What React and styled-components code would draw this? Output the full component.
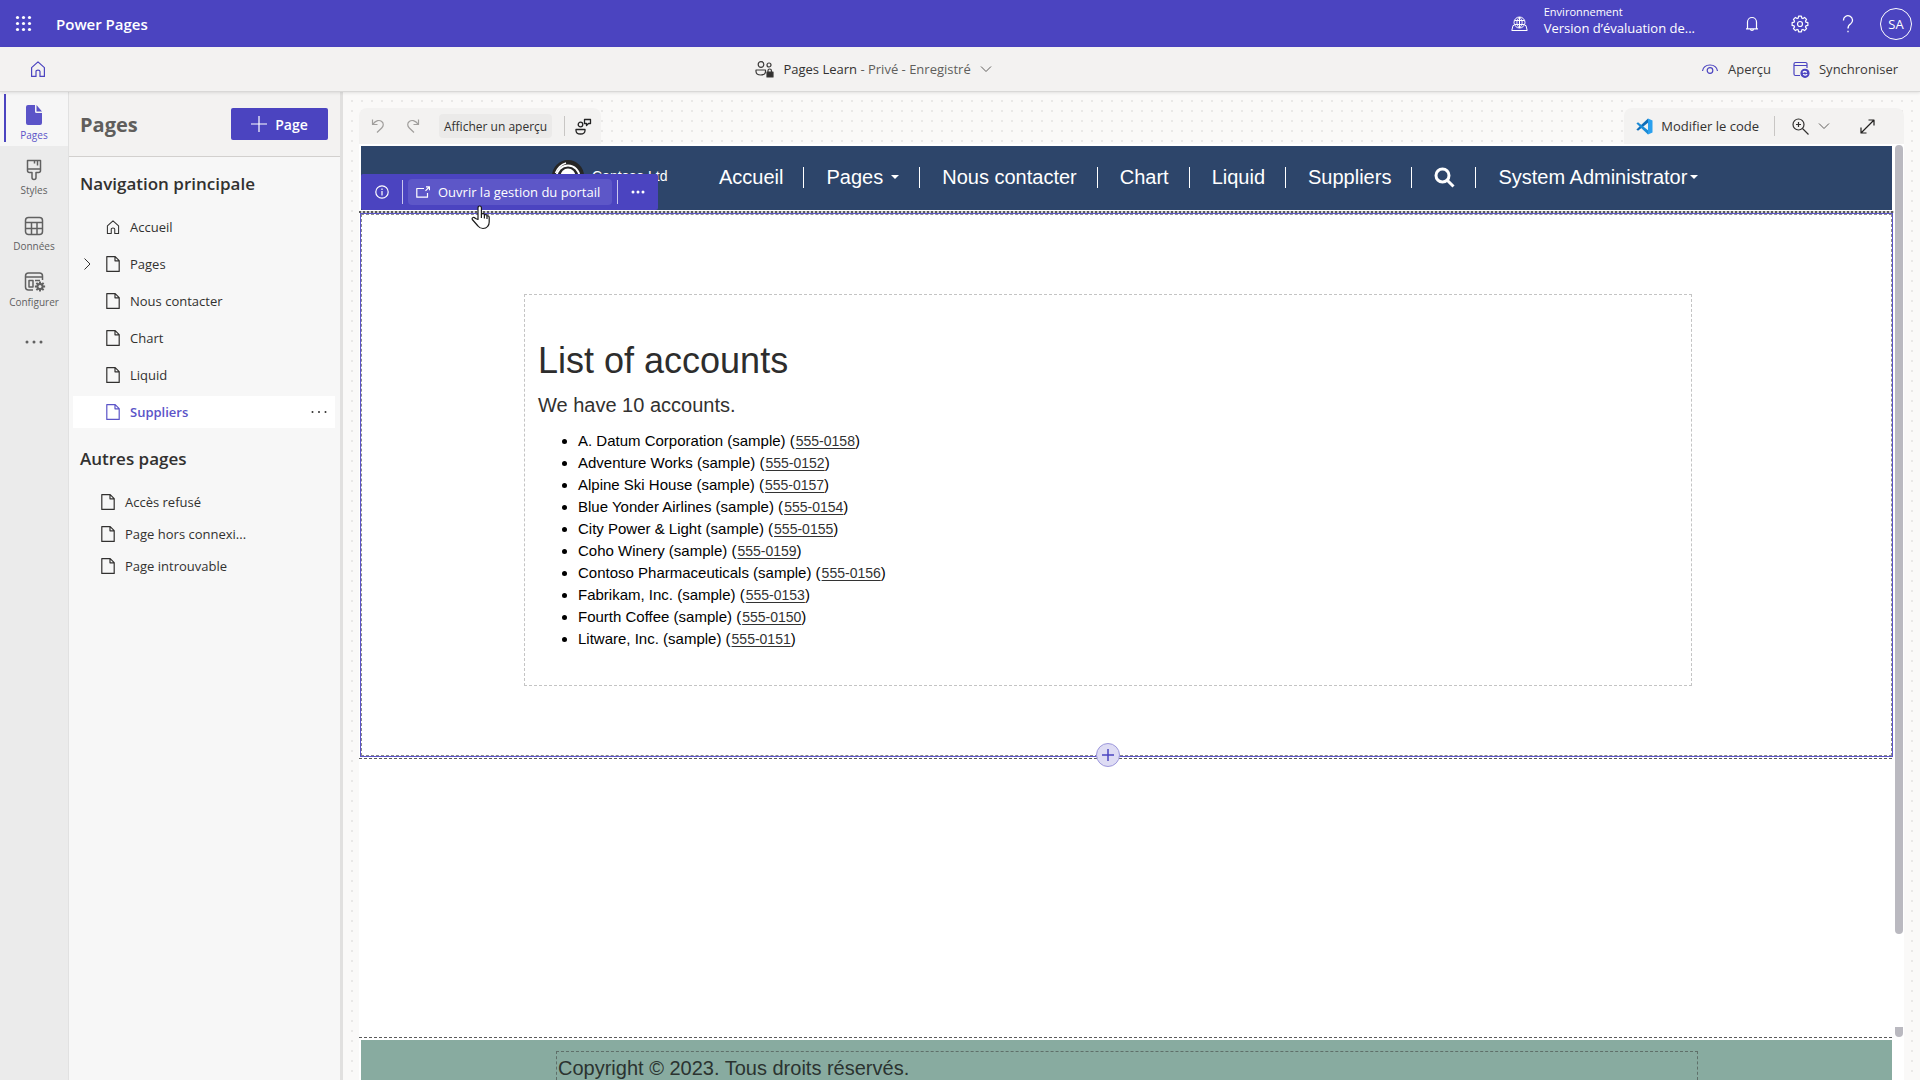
import React from "react";
import styled, { createGlobalStyle } from "styled-components";

const ui = `"Segoe UI", "Open Sans", "Noto Sans", sans-serif`;
const site = `"Liberation Sans", Arial, sans-serif`;
const brand = "#4b44c0";

const GlobalStyle = createGlobalStyle`
  *, *::before, *::after { box-sizing: border-box; }
  body { margin: 0; background: #faf9f8; font-family: ${ui}; color: #323130; }
  button { font: inherit; color: inherit; background: none; border: 0; padding: 0; cursor: pointer; }
  a { color: inherit; text-decoration: none; }
  ul { margin: 0; padding: 0; list-style: none; }
  h1, h2, p { margin: 0; }
  svg { display: block; flex: none; }
`;

const Shell = styled.div`
  display: flex;
  flex-direction: column;
  height: 100vh;
  overflow: hidden;
`;

const TopBar = styled.header`
  display: flex;
  align-items: center;
  height: 47px;
  flex: none;
  padding: 0 8px 0 15px;
  background: ${brand};
  color: #fff;
`;
const IconButton = styled.button`
  display: flex;
  align-items: center;
  justify-content: center;
  width: ${(p) => p.$w || 48}px;
  height: 32px;
`;
const Brand = styled.a`
  flex: 1;
  margin-left: 24px;
  font-size: 15px;
  line-height: 20px;
  font-weight: 600;
`;
const Environment = styled.button`
  display: flex;
  align-items: center;
  gap: 16px;
  margin-right: 33px;
  text-align: left;
`;
const EnvText = styled.span`
  display: flex;
  flex-direction: column;
  padding-bottom: 8px;
  font-size: 13px;
  line-height: 16px;
`;
const EnvLabel = styled.span`
  font-size: 11px;
  line-height: 16px;
`;
const Avatar = styled.button`
  width: 32px;
  height: 32px;
  margin-left: 8px;
  border: 1px solid #fff;
  border-radius: 50%;
  font-size: 13px;
  text-align: center;
`;

const CommandBar = styled.div`
  position: relative;
  z-index: 2;
  display: grid;
  grid-template-columns: 9fr auto 11fr;
  align-items: center;
  height: 45px;
  flex: none;
  padding: 0 22px 0 14px;
  background: #f3f2f1;
  border-bottom: 1px solid #d9d8d7;
  box-shadow: 0 1px 3px rgba(0, 0, 0, 0.1);
  font-size: 13px;
`;
const SiteStatus = styled.button`
  display: flex;
  align-items: center;
  gap: 9px;
  color: #605e5c;
`;
const Strong = styled.span`
  color: #323130;
`;
const CommandActions = styled.div`
  display: flex;
  justify-content: flex-end;
  gap: 22px;
`;
const Command = styled.button`
  display: flex;
  align-items: center;
  gap: 9px;
  color: #3b3a39;
`;

const Workspace = styled.div`
  display: flex;
  flex: 1;
  min-height: 0;
`;

const Rail = styled.nav`
  display: flex;
  flex-direction: column;
  width: 68px;
  flex: none;
  background: #ebebeb;
`;
const RailItem = styled.button`
  display: flex;
  flex-direction: column;
  align-items: center;
  justify-content: center;
  gap: 2px;
  height: ${(p) => (p.$active ? 54 : 56)}px;
  padding-top: ${(p) => (p.$plain ? 0 : 8)}px;
  font-size: 10px;
  line-height: 14px;
  color: ${(p) => (p.$active ? "#5b54c8" : "#616161")};
  background: ${(p) => (p.$active ? "#f6f6f6" : "transparent")};
  ${(p) => p.$active && `background-image: linear-gradient(${brand}, ${brand}); background-size: 2px 48px; background-position: 4px 2px; background-repeat: no-repeat;`}
`;

const Panel = styled.aside`
  width: 275px;
  flex: none;
  background: #f7f7f7;
  border-left: 1px solid #e1e1e1;
  border-right: 3px solid #e1e0df;
`;
const PanelHeader = styled.div`
  display: flex;
  align-items: center;
  justify-content: space-between;
  height: 65px;
  padding: 0 12px 0 11px;
  background: #f3f2f1;
  border-bottom: 1px solid #d2d0ce;
`;
const PanelTitle = styled.h1`
  padding-top: 2px;
  font-size: 20px;
  line-height: 28px;
  font-weight: 700;
  color: #605e5c;
`;
const AddButton = styled.button`
  display: flex;
  align-items: center;
  justify-content: center;
  gap: 8px;
  width: 97px;
  height: 32px;
  border-radius: 2px;
  background: ${brand};
  color: #fff;
  font-size: 14px;
  font-weight: 600;
`;
const GroupTitle = styled.h2`
  padding: 13px 11px;
  font-size: 17px;
  line-height: 28px;
  font-weight: 600;
  color: #323130;
`;
const Tree = styled.ul`
  display: flex;
  flex-direction: column;
  gap: ${(p) => p.$gap}px;
  padding: 0 5px 4px ${(p) => p.$inset}px;
`;
const TreeRow = styled.li`
  display: flex;
  align-items: center;
  height: 32px;
  padding-right: 8px;
  font-size: 13px;
  color: ${(p) => (p.$active ? "#5b54c8" : "#323130")};
  font-weight: ${(p) => (p.$active ? 600 : 400)};
  background: ${(p) => (p.$active ? "#fff" : "transparent")};
`;
const Expander = styled.button`
  display: flex;
  width: 33px;
  padding-left: 10px;
`;
const TreeLink = styled.a`
  display: flex;
  align-items: center;
  flex: 1;
  gap: 10px;
`;

const Canvas = styled.main`
  display: flex;
  flex-direction: column;
  flex: 1;
  min-width: 0;
  padding: 16px 16px 0;
  background: #faf9f8 radial-gradient(circle, #e9e8e7 1px, transparent 1px) 4px 4px / 10px 10px;
`;
const Toolbars = styled.div`
  display: flex;
  justify-content: space-between;
  flex: none;
`;
const Toolbar = styled.div`
  display: flex;
  align-items: center;
  height: 36px;
  padding-left: ${(p) => p.$pad}px;
  border-radius: 8px 8px 0 0;
  background: #f3f2f1;
  font-size: 13px;
`;
const PreviewButton = styled.button`
  height: 24px;
  margin: 0 12px 0 9px;
  padding: 0 5px;
  border-radius: 4px;
  background: #ebeae9;
  font-size: 12px;
`;
const Divider = styled.span`
  width: 1px;
  height: ${(p) => p.$h || 20}px;
  margin-right: ${(p) => p.$after || 0}px;
  background: ${(p) => p.$color || "#c8c6c4"};
`;
const CodeButton = styled.button`
  display: flex;
  align-items: center;
  gap: 8px;
  margin-right: 15px;
`;

const Frame = styled.div`
  display: flex;
  flex: 1;
  min-height: 0;
  background: #fff;
`;
const SitePage = styled.div`
  display: flex;
  flex-direction: column;
  flex: 1;
  min-width: 0;
  padding-top: 2px;
  overflow: hidden;
  font-family: ${site};
`;
const ScrollTrack = styled.div`
  display: flex;
  flex-direction: column;
  justify-content: space-between;
  width: 10px;
  padding: 1px 1px 43px;
`;
const ScrollThumb = styled.div`
  height: ${(p) => p.$h};
  border-radius: ${(p) => p.$r};
  background: #bab9c0;
`;

const SiteNav = styled.nav`
  position: relative;
  display: flex;
  align-items: center;
  height: 64px;
  flex: none;
  margin: 0 2px 1px;
  padding: 0 0 2px 191px;
  background: #2d456a;
  color: #fff;
`;
const SiteLogo = styled.a`
  display: flex;
  align-items: center;
  gap: 8px;
  width: 145px;
  padding-bottom: 2px;
  font-size: 14px;
  line-height: 20px;
`;
const NavItem = styled.a`
  display: flex;
  align-items: center;
  gap: ${(p) => p.$gap || 0}px;
  height: 21px;
  padding: 0 20px 0 22px;
  border-right: ${(p) => (p.$last ? 0 : 1)}px solid #fff;
  font-size: 20px;
  white-space: nowrap;
`;
const Caret = styled.span`
  border: 4px solid transparent;
  border-top-color: #fff;
  border-bottom: 0;
`;

const SectionToolbar = styled.div`
  position: absolute;
  left: 0;
  bottom: 0;
  display: flex;
  align-items: center;
  height: 36px;
  border-radius: 2px;
  background: ${brand};
  font-family: ${ui};
  font-size: 13px;
`;
const OpenButton = styled.button`
  display: flex;
  align-items: center;
  gap: 8px;
  height: 26px;
  margin: 0 5px;
  padding: 0 12px 0 8px;
  border-radius: 4px;
  background: #5d57c8;
`;
const Pointer = styled.svg`
  position: absolute;
  left: 110px;
  top: 59px;
  z-index: 3;
`;

const DashRule = styled.div`
  height: ${(p) => p.$h}px;
  flex: none;
  background: repeating-linear-gradient(90deg, #5a5a5a 0 ${(p) => p.$on}px, ${(p) => p.$gap} ${(p) => p.$on}px ${(p) => p.$on + 2}px);
`;
const Section = styled.section`
  position: relative;
  margin: 0 1px;
  border: 1px solid #5b54c8;
`;
const SectionInner = styled.div`
  padding: 79px 199px 69px 162px;
  border: 1px dashed #8a8a8a;
`;
const TextBlock = styled.div`
  min-height: 392px;
  padding: 46px 13px 34px;
  border: 1px dashed #c4c4c4;
`;
const Title = styled.h1`
  font-size: 36px;
  line-height: 40px;
  font-weight: 400;
  color: #2d2d2d;
`;
const Subtitle = styled.h2`
  margin: 12px 0 13px;
  font-size: 20px;
  line-height: 24px;
  font-weight: 400;
  color: #323130;
`;
const Accounts = styled.ul`
  padding-left: 40px;
  list-style: disc;
  font-size: 15px;
  line-height: 22px;
  color: #000;
`;
const Phone = styled.a`
  margin-left: 1px;
  font-size: 14px;
  color: #333;
  text-decoration: underline;
  text-underline-offset: 2px;
`;
const AddSection = styled.button`
  position: absolute;
  left: calc(50% - 31px);
  bottom: -11px;
  display: flex;
  align-items: center;
  justify-content: center;
  width: 24px;
  height: 24px;
  border: 1px solid #9d98dc;
  border-radius: 50%;
  background: #dedcf4;
`;
const EmptyArea = styled.div`
  flex: 1;
  padding-top: 1px;
`;
const Footer = styled.footer`
  flex: none;
  height: 40px;
  margin: 2px 2px 0;
  padding: 11px 194px 0 195px;
  background: #88aba0;
`;
const FooterText = styled.p`
  height: 29px;
  padding: 4px 1px 0;
  border: 1px dashed #5f6f69;
  border-bottom: 0;
  font-size: 20px;
  line-height: 24px;
  color: #2b3330;
`;

const Svg = ({ w = 20, h, vb, children, color = "currentColor", sw = 1 }) => (
  <svg width={w} height={h || w} viewBox={vb || `0 0 ${w} ${h || w}`} fill="none" stroke={color} strokeWidth={sw} strokeLinejoin="round" aria-hidden="true">
    {children}
  </svg>
);

const HomeIcon = ({ color, size = 16 }) => (
  <Svg w={size} vb="0 0 16 16" color={color} sw={1.2}>
    <path d="M1.6 6.6 8 .9l6.4 5.7v8.8H10V10.5Q10 9.2 8 9.2t-2 1.3v4.9H1.6z" />
  </Svg>
);
const FileIcon = () => (
  <Svg w={14} h={16} sw={1.2}>
    <path d="M.8.6h8.4l4 4v10.8H.8zM9 .8v4h4" />
  </Svg>
);
const ChevronDown = ({ color = "#605e5c" }) => (
  <Svg w={12} h={8} color={color}>
    <path d="m1 1.5 5 5 5-5" />
  </Svg>
);
const Dots = ({ w = 16, r = 1, color = "currentColor" }) => (
  <svg width={w} height="4" viewBox={`0 0 ${w} 4`} fill={color} aria-hidden="true">
    <circle cx={r + 0.5} cy="2" r={r} />
    <circle cx={w / 2} cy="2" r={r} />
    <circle cx={w - r - 0.5} cy="2" r={r} />
  </svg>
);
const gearPath = (cx, cy, r1, r2, n) => {
  const pts = [];
  for (let i = 0; i < n; i++) {
    const a = (i / n) * Math.PI * 2 - Math.PI / 2;
    const s = Math.PI / n;
    [[-0.75, r1], [-0.45, r2], [0.45, r2], [0.75, r1]].forEach(([k, r]) =>
      pts.push(`${(cx + Math.cos(a + s * k) * r).toFixed(2)} ${(cy + Math.sin(a + s * k) * r).toFixed(2)}`)
    );
  }
  return `M${pts.join("L")}z`;
};

const railItems = [
  {
    label: "Pages",
    icon: (
      <svg width="24" height="22" viewBox="0 0 24 22" fill="#5b54c8" aria-hidden="true">
        <path d="M6 1h7v6.5A1.5 1.5 0 0 0 14.500 9H20v10a2 2 0 0 1-2 2H6a2 2 0 0 1-2-2V3a2 2 0 0 1 2-2z" />
        <path d="M14.500 1 20 7.500h-5.500z" />
      </svg>
    ),
  },
  {
    label: "Styles",
    icon: (
      <Svg w={24} h={22} sw={1.5}>
        <path d="M5.500 1.500h13v10a2 2 0 0 1-2 2h-2.500v5a2 2 0 0 1-4 0v-5H7.500a2 2 0 0 1-2-2zM5.500 10h13M12.500 1.500v3M15.500 1.500v5" />
      </Svg>
    ),
  },
  {
    label: "Données",
    icon: (
      <Svg w={24} h={22} sw={1.5}>
        <rect x="3.500" y="2.500" width="17" height="17" rx="3" />
        <path d="M3.500 7.500h17M3.500 13.500h17M9.500 7.500v12M15 7.500v12" />
      </Svg>
    ),
  },
  {
    label: "Configurer",
    icon: (
      <Svg w={24} h={22} sw={1.5}>
        <path d="M20.500 9V5a3 3 0 0 0-3-3h-11a3 3 0 0 0-3 3v11a3 3 0 0 0 3 3H11M3.500 6h17M7 9.500h4v6.500H7zM13 9.500h5" />
        <path d={gearPath(18, 15.5, 3.6, 5.2, 8)} fill="currentColor" stroke="none" />
        <circle cx="18" cy="15.500" r="1.500" fill="#ebebeb" stroke="none" />
      </Svg>
    ),
  },
];

const mainPages = [
  { label: "Accueil", home: true },
  { label: "Pages", expandable: true },
  { label: "Nous contacter" },
  { label: "Chart" },
  { label: "Liquid" },
  { label: "Suppliers", active: true },
];
const otherPages = ["Accès refusé", "Page hors connexi...", "Page introuvable"];

const accounts = [
  ["A. Datum Corporation", "555-0158"],
  ["Adventure Works", "555-0152"],
  ["Alpine Ski House", "555-0157"],
  ["Blue Yonder Airlines", "555-0154"],
  ["City Power & Light", "555-0155"],
  ["Coho Winery", "555-0159"],
  ["Contoso Pharmaceuticals", "555-0156"],
  ["Fabrikam, Inc.", "555-0153"],
  ["Fourth Coffee", "555-0150"],
  ["Litware, Inc.", "555-0151"],
];

function Header() {
  return (
    <TopBar>
      <IconButton $w={17} aria-label="Lanceur d'applications">
        <svg width="17" height="17" viewBox="0 0 17 17" fill="#fff" aria-hidden="true">
          {[2.5, 8.5, 14.5].map((y) => [2.5, 8.5, 14.5].map((x) => <circle key={`${x}-${y}`} cx={x} cy={y} r="1.600" />))}
        </svg>
      </IconButton>
      <Brand href="#">Power Pages</Brand>
      <Environment>
        <Svg w={17} h={16}>
          <circle cx="8.500" cy="6.500" r="5.500" />
          <path d="M3.500 4.500h10M3.500 8.500h10M8.500 1v11M8.500 1c-3.500 3.500-3.500 7.500 0 11c3.500-3.500 3.500-7.500 0-11" />
          <path d="M3 9.500H2L.8 14.500h15.400l-1.200-5h-1" />
        </Svg>
        <EnvText>
          <EnvLabel>Environnement</EnvLabel>
          Version d’évaluation de...
        </EnvText>
      </Environment>
      <IconButton aria-label="Notifications">
        <Svg w={16} sw={1.2}>
          <path d="M2 12.800h12M3.500 12.500V6a4.500 4.500 0 0 1 9 0v6.500M6.500 13a1.500 1.500 0 0 0 3 0" />
        </Svg>
      </IconButton>
      <IconButton aria-label="Paramètres">
        <Svg w={18} sw={1.2}>
          <path d={gearPath(9, 9, 6.2, 8, 8)} />
          <circle cx="9" cy="9" r="2.500" />
        </Svg>
      </IconButton>
      <IconButton aria-label="Aide">
        <Svg w={12} h={18} sw={1.3}>
          <path d="M1.500 5.500a4.500 4.500 0 1 1 7.200 3.300Q6 10.500 6 13.500M6 15.800v1.400" />
        </Svg>
      </IconButton>
      <Avatar>SA</Avatar>
    </TopBar>
  );
}

function Commands() {
  return (
    <CommandBar>
      <IconButton aria-label="Accueil">
        <HomeIcon color={brand} />
      </IconButton>
      <SiteStatus>
        <Svg w={19} h={18} sw={1.2} color="#3b3a39">
          <circle cx="6" cy="4.500" r="2.800" />
          <circle cx="14" cy="5" r="2" />
          <path d="M1 10h9.500v1.500q0 3.500-4.700 3.500T1 11.500z" />
          <path d="M13 12v-1.500q0-1.500 1.700-1.500t1.700 1.500V12" />
          <rect x="12" y="12" width="6" height="5" fill="#323130" />
        </Svg>
        <span>
          <Strong>Pages Learn</Strong> - Privé - Enregistré
        </span>
        <ChevronDown />
      </SiteStatus>
      <CommandActions>
        <Command>
          <Svg w={18} h={14} color={brand} sw={1.2}>
            <path d="M1.500 9Q2.500 3 9 3t7.500 6" />
            <circle cx="9" cy="8.500" r="2.800" />
          </Svg>
          Aperçu
        </Command>
        <Command>
          <Svg w={17} h={17} color={brand} sw={1.2}>
            <path d="M7 14.500H2.500a1.500 1.500 0 0 1-1.500-1.500V3a1.500 1.500 0 0 1 1.500-1.500h10A1.500 1.500 0 0 1 14 3v4M1 4.500h13" />
            <circle cx="12" cy="12.300" r="4" fill={brand} />
            <path d="M9.800 11.500q2-2 4 0M14.200 13.200q-2 2-4 0" stroke="#fff" />
          </Svg>
          Synchroniser
        </Command>
      </CommandActions>
    </CommandBar>
  );
}

function SideRail() {
  return (
    <Rail>
      {railItems.map((item, i) => (
        <RailItem key={item.label} $active={i === 0}>
          {item.icon}
          {item.label}
        </RailItem>
      ))}
      <RailItem $plain aria-label="Plus">
        <Dots w={18} r={1.5} />
      </RailItem>
    </Rail>
  );
}

function PagesPanel() {
  return (
    <Panel>
      <PanelHeader>
        <PanelTitle>Pages</PanelTitle>
        <AddButton>
          <Svg w={16} sw={1.2}>
            <path d="M8 0v16M0 8h16" />
          </Svg>
          Page
        </AddButton>
      </PanelHeader>
      <GroupTitle>Navigation principale</GroupTitle>
      <Tree $gap={5} $inset={4}>
        {mainPages.map((p) => (
          <TreeRow key={p.label} $active={p.active}>
            <Expander as={p.expandable ? "button" : "span"} aria-label={p.expandable ? "Développer" : undefined}>
              {p.expandable && (
                <Svg w={8} h={12}>
                  <path d="m1.500 .5 5.500 5.500-5.500 5.500" />
                </Svg>
              )}
            </Expander>
            <TreeLink href="#">
              {p.home ? <HomeIcon size={14} /> : <FileIcon />}
              {p.label}
            </TreeLink>
            {p.active && (
              <button aria-label="Plus d'options">
                <Dots w={16} r={1} color="#323130" />
              </button>
            )}
          </TreeRow>
        ))}
      </Tree>
      <GroupTitle>Autres pages</GroupTitle>
      <Tree $gap={0} $inset={32}>
        {otherPages.map((label) => (
          <TreeRow key={label}>
            <TreeLink href="#">
              <FileIcon />
              {label}
            </TreeLink>
          </TreeRow>
        ))}
      </Tree>
    </Panel>
  );
}

function EditorToolbars() {
  return (
    <Toolbars>
      <Toolbar $pad={1}>
        <IconButton $w={35} aria-label="Annuler">
          <Svg w={14} h={14} color="#a19f9d" sw={1.2}>
            <path d="M1.500.5v5h5M1.700 5.300C5 1 8.500.8 10.700 2.500s2 4.500 0 6.500L6 13.500" />
          </Svg>
        </IconButton>
        <IconButton $w={35} aria-label="Rétablir">
          <Svg w={14} h={14} color="#a19f9d" sw={1.2}>
            <path d="M12.500.5v5h-5M12.300 5.300C9 1 5.500.8 3.300 2.500s-2 4.500 0 6.500L8 13.500" />
          </Svg>
        </IconButton>
        <PreviewButton>Afficher un aperçu</PreviewButton>
        <Divider />
        <IconButton $w={36} aria-label="Commentaires">
          <Svg w={17} h={17} color="#242424" sw={1.3}>
            <circle cx="5.500" cy="6.500" r="2.300" />
            <path d="M1 11.500h9v1q0 3.500-4.500 3.500T1 12.500zM9.500 1.500h6v4h-2l-2 2v-2h-2z" />
          </Svg>
        </IconButton>
      </Toolbar>
      <Toolbar $pad={12}>
        <CodeButton>
          <svg width="17" height="17" viewBox="0 0 17 17" aria-hidden="true">
            <path d="M12 .5 16.500 2.500v12L12 16.500z" fill="#2aa0ee" />
            <path d="M12 .5v4.300L2 12.800.4 11.500z" fill="#0f6db8" />
            <path d="M12 16.500v-4.300L2 4.200.4 5.500z" fill="#1b8bd6" />
          </svg>
          Modifier le code
        </CodeButton>
        <Divider $after={8} />
        <IconButton $w={35} aria-label="Zoom">
          <Svg w={18} h={17} sw={1.2}>
            <circle cx="6.500" cy="6.500" r="5.500" />
            <path d="M10.500 10.500l6 6M6.500 4v5M4 6.500h5" />
          </Svg>
        </IconButton>
        <IconButton $w={12} aria-label="Options de zoom">
          <ChevronDown />
        </IconButton>
        <IconButton $w={74} aria-label="Plein écran">
          <Svg w={15} color="#201f1e" sw={1.2}>
            <path d="M1 14 14 1M8.500 1H14v5.500M1 8.500V14h5.500" />
          </Svg>
        </IconButton>
      </Toolbar>
    </Toolbars>
  );
}

function SiteHeader() {
  return (
    <SiteNav>
      <SiteLogo href="#">
        <svg width="32" height="32" viewBox="0 0 32 32" aria-hidden="true">
          <circle cx="16" cy="16" r="16" fill="#262626" />
          <circle cx="16" cy="17" r="11.500" fill="none" stroke="#fff" strokeWidth="2" />
          <path d="M3.500 13Q7 5 14 3" fill="none" stroke="#fff" strokeWidth="1.500" />
          <circle cx="16" cy="16" r="7.500" fill="#fff" />
        </svg>
        Contoso Ltd
      </SiteLogo>
      <NavItem href="#">Accueil</NavItem>
      <NavItem href="#" $gap={8}>Pages<Caret /></NavItem>
      <NavItem href="#">Nous contacter</NavItem>
      <NavItem href="#">Chart</NavItem>
      <NavItem href="#">Liquid</NavItem>
      <NavItem href="#">Suppliers</NavItem>
      <NavItem href="#" aria-label="Rechercher">
        <Svg w={21} sw={3}>
          <circle cx="8.500" cy="8.500" r="6.500" />
          <path d="m13 13 6.500 6.500" />
        </Svg>
      </NavItem>
      <NavItem href="#" $gap={3} $last>System Administrator<Caret /></NavItem>
      <SectionToolbar>
        <IconButton $w={41} aria-label="Informations">
          <Svg w={14} sw={1.2}>
            <circle cx="7" cy="7" r="6.200" />
            <path d="M7 6v4.500M7 3.500V5" />
          </Svg>
        </IconButton>
        <Divider $h={24} $color="#c9c6ee" />
        <OpenButton>
          <Svg w={14} h={12} sw={1.2}>
            <path d="M8 2.500H.8v8.700h10.700V7M10 .8h3.500v3.500M13.300 1 9.500 4.800" />
          </Svg>
          Ouvrir la gestion du portail
        </OpenButton>
        <Divider $h={24} $color="#c9c6ee" />
        <IconButton $w={40} aria-label="Plus d'actions">
          <Dots w={14} r={1.5} />
        </IconButton>
      </SectionToolbar>
      <Pointer width="20" height="26" viewBox="0 0 20 26" fill="#fff" stroke="#1b1b1b" strokeWidth="1.200" strokeLinejoin="round" aria-hidden="true">
        <path d="M7 14.500V3q0-2 1.700-2t1.700 2v6q2.500-1 3 .8 2.300-.6 2.600 1 2-.3 2.200 1.600V17q0 3-1.600 4.500-1.600 2-4.600 2-3.200 0-5-2.500L1.300 14.500q-.6-1.600.8-2 1.300-.2 2.400 1z" />
        <path d="M10.400 9v4M13.400 10v3.500M16 11v3" />
      </Pointer>
    </SiteNav>
  );
}

export default function App() {
  return (
    <Shell>
      <GlobalStyle />
      <Header />
      <Commands />
      <Workspace>
        <SideRail />
        <PagesPanel />
        <Canvas>
          <EditorToolbars />
          <Frame>
            <SitePage>
              <SiteHeader />
              <DashRule $h={2} $on={2} $gap="#cfcfcf" />
              <Section>
                <SectionInner>
                  <TextBlock>
                    <Title>List of accounts</Title>
                    <Subtitle>We have 10 accounts.</Subtitle>
                    <Accounts>
                      {accounts.map(([name, phone]) => (
                        <li key={name}>
                          {name} (sample) (<Phone href={`tel:${phone}`}>{phone}</Phone>)
                        </li>
                      ))}
                    </Accounts>
                  </TextBlock>
                </SectionInner>
                <AddSection aria-label="Ajouter une section">
                  <Svg w={12} color={brand} sw={1.5}>
                    <path d="M6 0v12M0 6h12" />
                  </Svg>
                </AddSection>
              </Section>
              <EmptyArea>
                <DashRule $h={1} $on={3} $gap="#fff" />
              </EmptyArea>
              <DashRule $h={1} $on={3} $gap="#fff" />
              <Footer>
                <FooterText>Copyright © 2023. Tous droits réservés.</FooterText>
              </Footer>
            </SitePage>
            <ScrollTrack>
              <ScrollThumb $h="789px" $r="4px" />
              <ScrollThumb $h="10px" $r="0 0 4px 4px" />
            </ScrollTrack>
          </Frame>
        </Canvas>
      </Workspace>
    </Shell>
  );
}
